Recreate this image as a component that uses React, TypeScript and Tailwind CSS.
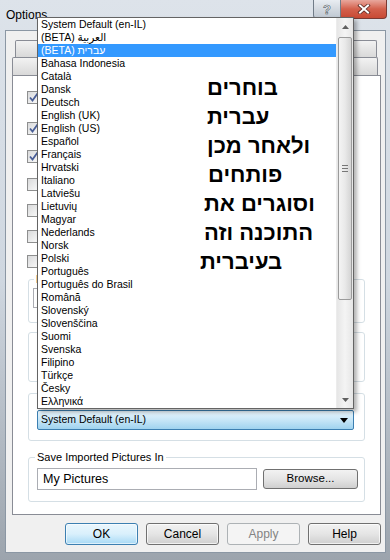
import React from 'react';

const LANGS = [
  'System Default (en-IL)',
  '(BETA) العربية',
  '(BETA) עברית',
  'Bahasa Indonesia',
  'Català',
  'Dansk',
  'Deutsch',
  'English (UK)',
  'English (US)',
  'Español',
  'Français',
  'Hrvatski',
  'Italiano',
  'Latviešu',
  'Lietuvių',
  'Magyar',
  'Nederlands',
  'Norsk',
  'Polski',
  'Português',
  'Português do Brasil',
  'Română',
  'Slovenský',
  'Slovenščina',
  'Suomi',
  'Svenska',
  'Filipino',
  'Türkçe',
  'Česky',
  'Ελληνικά',
];

// handwritten-looking overlay lines, each with its own left edge
const NOTE = [
  { t: 'בוחרים', cls: 'pl-[207px]' },
  { t: 'עברית', cls: 'pl-[207px]' },
  { t: 'ולאחר מכן', cls: 'pl-[207px]' },
  { t: 'פותחים', cls: 'pl-[208px]' },
  { t: 'וסוגרים את', cls: 'pl-[204px]' },
  { t: 'התוכנה וזה', cls: 'pl-[204px]' },
  { t: 'בעיברית', cls: 'pl-[200px]' },
];

const CHECKS = [
  { on: true, cls: 'mt-[15px]' },
  { on: true, cls: 'mt-[18px]' },
  { on: true, cls: 'mt-[15px]' },
  { on: false, cls: 'mt-[15px]' },
  { on: false, cls: 'mt-[13px]' },
  { on: false, cls: 'mt-[13px]' },
  { on: false, cls: 'mt-[12px]' },
];

function Check({ on, cls }: { on: boolean; cls: string }) {
  return (
    <div className={`${cls} w-[13px] h-[13px] border border-[#8e8f8f] bg-gradient-to-br from-[#d9dadb] to-[#fbfbfb] flex items-center justify-center`}>
      {on && (
        <svg width="11" height="11" viewBox="0 0 11 11">
          <path d="M2 5.5 L4.5 8.5 L9.5 1.5" fill="none" stroke="#4a5f97" strokeWidth="1.8" />
        </svg>
      )}
    </div>
  );
}

function Button({ label, kind }: { label: string; kind?: 'default' | 'disabled' }) {
  if (kind === 'default') {
    return (
      <div className="w-[73px] h-[22px] rounded-[3px] border border-[#3c7fb1] bg-gradient-to-b from-[#eaf6fd] via-[#d9f0fc] to-[#a7d9f5] flex items-center justify-center text-[12px] text-black shadow-[inset_0_0_0_1px_rgba(255,255,255,0.6)]">
        {label}
      </div>
    );
  }
  if (kind === 'disabled') {
    return (
      <div className="w-[73px] h-[22px] rounded-[3px] border border-[#adb2b5] bg-[#f4f4f4] flex items-center justify-center text-[12px] text-[#838383]">
        {label}
      </div>
    );
  }
  return (
    <div className="w-[73px] h-[22px] rounded-[3px] border border-[#707070] bg-gradient-to-b from-[#f2f2f2] via-[#e5e5e5] to-[#cfcfcf] flex items-center justify-center text-[12px] text-black shadow-[inset_0_0_0_1px_rgba(255,255,255,0.7)]">
      {label}
    </div>
  );
}

function Arrow({ up }: { up?: boolean }) {
  return (
    <svg width="7" height="4" viewBox="0 0 7 4">
      <path d={up ? 'M0 4 L3.5 0 L7 4 Z' : 'M0 0 L3.5 4 L7 0 Z'} fill="#606060" />
    </svg>
  );
}

function Scrollbar() {
  return (
    <div className="w-[17px] h-full flex flex-col bg-gradient-to-r from-[#e6e6e6] via-[#f4f4f4] to-[#e6e6e6] border-l border-[#ececec]">
      <div className="h-[17px] flex items-center justify-center">
        <Arrow up />
      </div>
      <div className="mt-[2px] h-[263px] mx-[1px] rounded-[2px] border border-[#9b9b9b] bg-gradient-to-r from-[#f4f4f4] via-[#e9e9e9] to-[#d4d4d4] flex flex-col items-center justify-center gap-[2px]">
        <div className="w-[6px] h-px bg-[#777]" />
        <div className="w-[6px] h-px bg-[#777]" />
        <div className="w-[6px] h-px bg-[#777]" />
      </div>
      <div className="flex-1" />
      <div className="h-[17px] flex items-center justify-center">
        <Arrow />
      </div>
    </div>
  );
}

function Group({ label, cls, h, children, labelCls }: { label?: string; cls: string; h: string; children?: React.ReactNode; labelCls?: string }) {
  return (
    <div className={`${cls} ${h} relative ml-[15px] w-[337px] rounded-[3px] border border-[#d5dfe5]`}>
      {label && (
        <div className={`absolute ${labelCls ?? 'left-[5px]'} -top-[8px] px-[2px] bg-white text-[11px] leading-[14px] text-black`}>{label}</div>
      )}
      {children}
    </div>
  );
}

export default function App() {
  return (
    <div className="relative w-[390px] h-[560px] overflow-hidden bg-gradient-to-b from-[#dde3ea] via-[#cfd7e0] to-[#9ca4ad] font-['Liberation_Sans','DejaVu_Sans',sans-serif]">
      {/* title bar */}
      <div className="flex h-[30px]">
        <div className="pl-[6px] pt-[8px] text-[12px] leading-[15px] text-black">Options</div>
        <div className="ml-auto mr-[3px] flex items-start">
          <div className="w-[28px] h-[19px] rounded-bl-[4px] border border-t-0 border-[#717c88] bg-gradient-to-b from-[#e9edf2] via-[#d3d9e0] to-[#bfc8d2] flex items-center justify-center">
            <span className="text-[13px] font-bold leading-none text-white [-webkit-text-stroke:0.6px_#4a5460]">?</span>
          </div>
          <div className="w-[46px] h-[19px] rounded-br-[4px] border border-t-0 border-l-0 border-[#7a3a33] bg-gradient-to-b from-[#e8a79d] via-[#d3604c] to-[#c84a34] flex items-center justify-center">
            <svg width="14" height="10" viewBox="0 0 14 10">
              <path d="M3 1.5 L11 8.5 M11 1.5 L3 8.5" stroke="#5a2a25" strokeWidth="3.6" strokeLinecap="square" />
              <path d="M3 1.5 L11 8.5 M11 1.5 L3 8.5" stroke="#ffffff" strokeWidth="2" strokeLinecap="square" />
            </svg>
          </div>
        </div>
      </div>

      {/* client area */}
      <div className="ml-[5px] w-[381px] h-[523px] border border-[#8b97a4] bg-[#f0f0f0] flex flex-col">
        <div className="mt-[9px] ml-[6px] flex flex-col">
          {/* back row of tabs */}
          <div className="ml-[3px] w-[362px] h-[17px] flex">
            {[0, 1, 2, 3].map((i) => (
              <div key={i} className="flex-1 border border-b-0 border-[#898c95] rounded-t-[2px] bg-gradient-to-b from-[#f2f2f2] to-[#d9d9d9]" />
            ))}
          </div>
          {/* front row of tabs */}
          <div className="w-[366px] h-[18px] flex">
            {[0, 1, 2, 3].map((i) => (
              <div key={i} className="flex-1 border border-b-0 border-[#898c95] rounded-t-[2px] bg-gradient-to-b from-[#f2f2f2] to-[#d9d9d9]" />
            ))}
          </div>
          {/* tab panel */}
          <div className="w-[369px] h-[440px] border border-[#898c95] bg-white flex flex-col">
            <div className="pl-[14px] flex flex-col">
              {CHECKS.map((c, i) => (
                <Check key={i} on={c.on} cls={c.cls} />
              ))}
            </div>

            <Group label="H" cls="mt-[11px]" h="h-[44px]">
              <div className="ml-[4px] mt-[8px] w-[300px] h-[20px] border border-[#abadb3] bg-white" />
            </Group>

            <Group cls="mt-[9px]" h="h-[50px]" />

            <Group cls="mt-[11px]" h="h-[48px]">
              <div className="ml-[8px] mt-[16px] w-[317px] h-[20px] rounded-[2px] border border-[#3c7fb1] bg-gradient-to-b from-[#eaf6fd] via-[#c7e6f7] to-[#9fd3ef] flex items-center pl-[3px] pr-[5px] text-[10.5px] text-black">
                System Default (en-IL)
                <svg className="ml-auto" width="8" height="5" viewBox="0 0 8 5">
                  <path d="M0 0 L4 5 L8 0 Z" fill="#000" />
                </svg>
              </div>
            </Group>

            <Group label="Save Imported Pictures In" cls="mt-[16px]" h="h-[45px]" labelCls="left-[6px]">
              <div className="mt-[10px] ml-[8px] flex items-center">
                <div className="w-[220px] h-[22px] border border-[#abadb3] bg-white flex items-center pl-[5px] text-[12.5px] text-black">
                  My Pictures
                </div>
                <div className="ml-[6px] w-[95px] h-[20px] rounded-[3px] border border-[#707070] bg-gradient-to-b from-[#f2f2f2] via-[#e5e5e5] to-[#cfcfcf] flex items-center justify-center text-[11.5px] text-black">
                  Browse...
                </div>
              </div>
            </Group>
          </div>
        </div>

        {/* dialog buttons */}
        <div className="mt-[8px] ml-[59px] flex gap-[8px]">
          <Button label="OK" kind="default" />
          <Button label="Cancel" />
          <Button label="Apply" kind="disabled" />
          <Button label="Help" />
        </div>
      </div>

      {/* open language dropdown */}
      <div className="absolute left-[37px] top-[17px] w-[317px] h-[392px] border border-[#646464] bg-white flex shadow-[3px_3px_4px_rgba(0,0,0,0.3)]">
        <div className="flex-1 flex flex-col">
          {LANGS.map((l, i) => (
            <div
              key={l}
              className={`h-[13px] leading-[13px] pl-[3px] text-[10.5px] whitespace-nowrap ${i === 2 ? 'bg-[#3399ff] text-white' : 'text-black'}`}
            >
              {l}
            </div>
          ))}
        </div>
        <Scrollbar />
      </div>

      {/* hebrew note written over the list */}
      <div className="absolute left-0 top-[73px] w-full flex flex-col text-[22px] leading-[29px] font-bold text-black">
        {NOTE.map((n) => (
          <div key={n.t} className={`${n.cls} text-left`}>
            <span dir="rtl" className="inline-block">{n.t}</span>
          </div>
        ))}
      </div>
    </div>
  );
}
